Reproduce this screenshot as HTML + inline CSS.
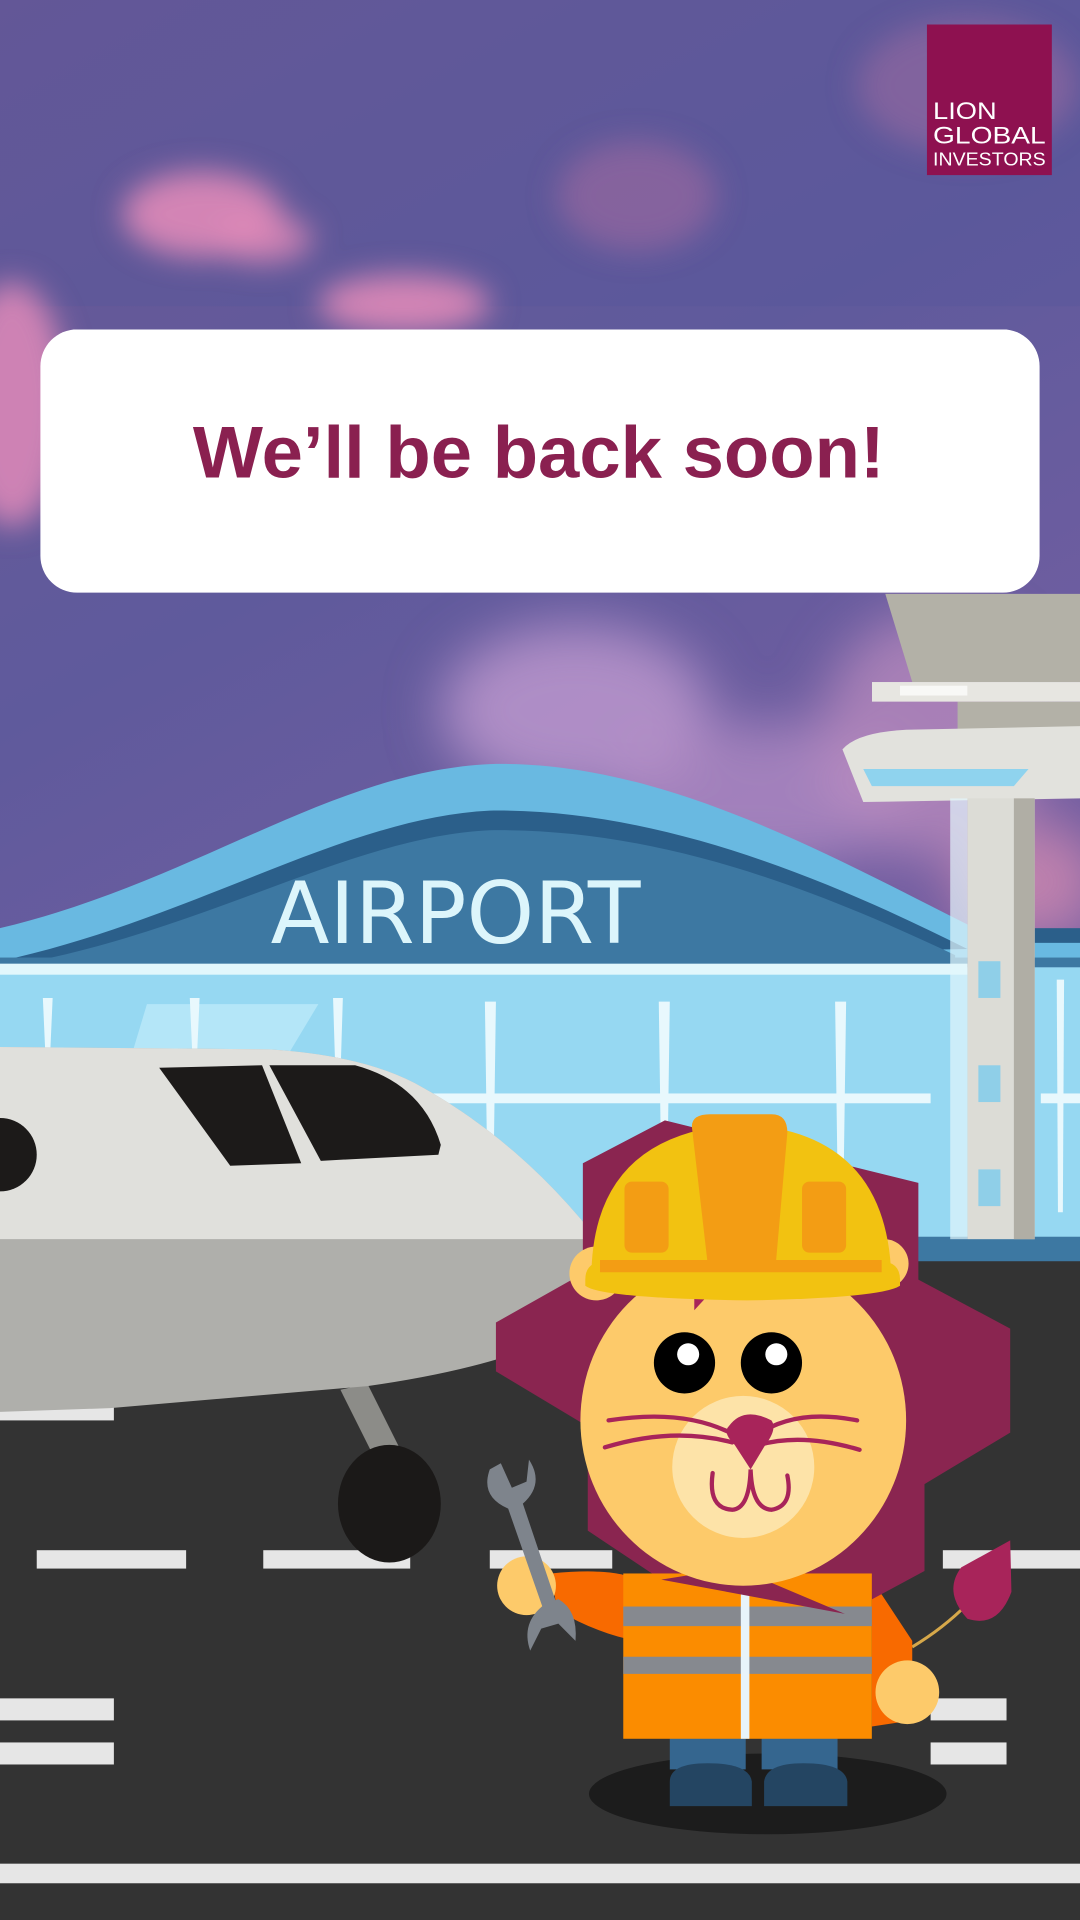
<!DOCTYPE html>
<html><head><meta charset="utf-8"><style>
html,body{margin:0;padding:0;width:1080px;height:1920px;overflow:hidden;background:#333}
svg{display:block}
</style></head><body>
<svg width="1080" height="1920" viewBox="0 0 882 1568" xmlns="http://www.w3.org/2000/svg">
<defs>
<linearGradient id="sky" x1="0" y1="0" x2="0.3" y2="1">
<stop offset="0" stop-color="#6a5896"/><stop offset="0.35" stop-color="#5f5a9c"/><stop offset="0.7" stop-color="#765fa2"/><stop offset="1" stop-color="#9170aa"/></linearGradient>
<filter id="b" x="-50%" y="-50%" width="200%" height="200%"><feGaussianBlur stdDeviation="12"/></filter>
<filter id="b2" x="-50%" y="-50%" width="200%" height="200%"><feGaussianBlur stdDeviation="22"/></filter>
</defs>
<rect width="882" height="1568" fill="url(#sky)"/>
<rect x="0" y="0" width="882" height="250" fill="#55569a" opacity="0.35"/>
<g filter="url(#b)">
<ellipse cx="165" cy="175" rx="65" ry="35" fill="#e08ab8" opacity="0.9"/>
<ellipse cx="215" cy="195" rx="40" ry="20" fill="#e08ab8" opacity="0.8"/>
<ellipse cx="330" cy="248" rx="70" ry="24" fill="#e08ab8" opacity="0.9"/>
<ellipse cx="10" cy="330" rx="45" ry="100" fill="#e08ab8" opacity="0.85"/>
<ellipse cx="520" cy="160" rx="65" ry="45" fill="#a06aa0" opacity="0.6"/>
<ellipse cx="790" cy="70" rx="90" ry="55" fill="#9a6aa0" opacity="0.6"/>
</g>
<g filter="url(#b2)">
<ellipse cx="470" cy="580" rx="110" ry="70" fill="#c09ad0" opacity="0.8"/>
<ellipse cx="620" cy="650" rx="120" ry="60" fill="#b890c8" opacity="0.7"/>
<ellipse cx="760" cy="600" rx="90" ry="100" fill="#c08ec0" opacity="0.7"/>
<ellipse cx="840" cy="720" rx="60" ry="50" fill="#d08ab0" opacity="0.8"/>
</g>
<rect x="757" y="20" width="102" height="123" fill="#8e1150"/>
<g font-family="Liberation Sans, sans-serif" fill="#fff">
<text x="762" y="97" font-size="20" textLength="52" lengthAdjust="spacingAndGlyphs">LION</text>
<text x="762" y="117" font-size="20" textLength="92" lengthAdjust="spacingAndGlyphs">GLOBAL</text>
<text x="762" y="135" font-size="15" textLength="92" lengthAdjust="spacingAndGlyphs">INVESTORS</text>
</g>
<polygon points="723,485 882,485 882,557 745,557" fill="#b3b1a7"/>
<rect x="712" y="557" width="170" height="16" fill="#e7e6e1"/>
<rect x="735" y="560" width="55" height="8" fill="#fff" opacity="0.7"/>
<rect x="782" y="573" width="100" height="28" fill="#b3b1a7"/>
<path d="M688,612 Q700,598 740,596 L882,593 L882,652 L705,655 Z" fill="#e2e2dd"/>
<polygon points="705,628 840,628 828,642 712,642" fill="#8fd3ee"/>
<path d="M0,758 C160,720 270,630 400,624 C540,620 680,700 800,760 L882,760 L882,790 L0,790 Z" fill="#69b9e1"/>
<path d="M0,785 C160,750 280,668 400,662 C540,660 680,720 790,775 L0,790 Z" fill="#2b5f8a"/>
<path d="M0,790 C160,765 285,683 400,678 C540,676 670,728 780,780 L780,790 Z" fill="#3d78a2"/>
<rect x="0" y="782" width="882" height="8" fill="#3d78a2"/>
<text x="372" y="770" text-anchor="middle" font-family="DejaVu Sans, sans-serif" font-weight="normal" font-size="70" fill="#dcf5fb" textLength="302" lengthAdjust="spacingAndGlyphs">AIRPORT</text>
<rect x="0" y="790" width="882" height="240" fill="#96d8f2"/>
<rect x="0" y="787" width="790" height="9" fill="#e2f7fc"/>
<rect x="845" y="758" width="37" height="12" fill="#2b5f8a"/>
<polygon points="120,820 260,820 230,870 105,870" fill="#b4e6f8"/>
<g fill="#e8f8fd">
<polygon points="35,815 43,815 41,860 37,860"/>
<polygon points="155,815 163,815 161,860 157,860"/>
<polygon points="272,815 280,815 278,880 274,880"/>
<polygon points="396,818 405,818 403,960 398,960"/>
<polygon points="538,818 547,818 545,960 540,960"/>
<polygon points="682,818 691,818 689,960 684,960"/>
<rect x="340" y="893" width="420" height="8"/>
<polygon points="863,800 869,800 868,990 864,990"/>
<rect x="850" y="893" width="32" height="8"/>
</g>
<rect x="740" y="1010" width="142" height="22" fill="#3d78a2"/>
<rect x="790" y="652" width="55" height="360" fill="#dcdcd6"/>
<rect x="828" y="652" width="17" height="360" fill="#b0aea5"/>
<rect x="776" y="652" width="14" height="360" fill="#e2f7fc" opacity="0.7"/>
<g fill="#8fcfe8"><rect x="799" y="785" width="18" height="30"/><rect x="799" y="870" width="18" height="30"/><rect x="799" y="955" width="18" height="30"/></g>
<rect x="0" y="1030" width="882" height="538" fill="#333"/>
<g fill="#e6e6e6">
<rect x="30" y="1266" width="122" height="15"/><rect x="215" y="1266" width="120" height="15"/><rect x="400" y="1266" width="100" height="15"/><rect x="770" y="1266" width="112" height="15"/>
<rect x="0" y="1387" width="93" height="18"/><rect x="0" y="1423" width="93" height="18"/>
<rect x="760" y="1387" width="62" height="18"/><rect x="760" y="1423" width="62" height="18"/>
<rect x="0" y="1522" width="882" height="16"/>
<rect x="0" y="1148" width="93" height="12"/>
</g>
<path d="M300,1130 L340,1210 L318,1215 L278,1135 Z" fill="#8c8c88"/>
<ellipse cx="318" cy="1228" rx="42" ry="48" fill="#1b1918"/>
<path d="M0,855 L220,857 Q300,862 345,888 Q420,930 478,1000 L478,1080 Q420,1115 300,1132 L90,1150 L0,1153 Z" fill="#afafab"/>
<path d="M0,855 L220,857 Q300,862 345,888 Q420,930 478,1000 L478,1012 L0,1012 Z" fill="#e0e0dc"/>
<polygon points="130,872 214,870 246,950 188,952" fill="#1c1a19"/>
<path d="M220,870 L290,870 Q345,885 360,935 L358,943 L262,948 Z" fill="#1c1a19"/>
<circle cx="0" cy="943" r="30" fill="#1c1a19"/>
<ellipse cx="627" cy="1465" rx="146" ry="33" fill="#1c1c1c"/>
<rect x="547" y="1405" width="62" height="40" fill="#35668f"/>
<rect x="622" y="1405" width="62" height="40" fill="#35668f"/>
<path d="M547,1475 L547,1455 Q547,1440 578,1440 Q612,1440 614,1455 L614,1475 Z" fill="#244562"/>
<path d="M624,1475 L624,1455 Q626,1440 656,1440 Q690,1440 692,1455 L692,1475 Z" fill="#244562"/>
<path d="M745,1345 Q770,1330 790,1310" stroke="#d6a84a" stroke-width="2.5" fill="none"/>
<path d="M790,1322 Q770,1300 785,1280 L825,1258 L826,1300 Q815,1330 790,1322 Z" fill="#a8245a"/>
<path d="M712,1290 L745,1340 L745,1405 L712,1410 Z" fill="#f86a00"/>
<circle cx="741" cy="1382" r="26" fill="#fdca6a"/>
<path d="M450,1285 Q500,1280 520,1290 L520,1340 Q490,1335 455,1315 Z" fill="#f86a00"/>
<circle cx="430" cy="1295" r="24" fill="#fdca6a"/>
<polygon points="476,950 543,915 750,966 750,1045 825,1085 825,1170 755,1212 755,1283 690,1318 540,1290 480,1250 480,1165 405,1120 405,1080 476,1040" fill="#8a2550"/>
<rect x="509" y="1285" width="203" height="135" fill="#fb8c00"/>
<rect x="509" y="1312" width="203" height="16" fill="#86898f"/>
<rect x="509" y="1353" width="203" height="14" fill="#86898f"/>
<rect x="605" y="1282" width="7" height="138" fill="#e8f4fa"/>
<path d="M540,1290 L603,1280 L612,1285 L690,1318 Z" fill="#8a2550"/>
<circle cx="487" cy="1040" r="22" fill="#fdca6a"/>
<circle cx="722" cy="1032" r="20" fill="#fdca6a"/>
<ellipse cx="607" cy="1160" rx="133" ry="135" fill="#fdca6a"/>
<circle cx="607" cy="1198" r="58" fill="#fde3a8"/>
<polygon points="567,1045 590,1045 567,1070" fill="#a8245a"/>
<circle cx="559" cy="1113" r="25" fill="#000"/><circle cx="630" cy="1113" r="25" fill="#000"/>
<circle cx="562" cy="1106" r="9" fill="#fff"/><circle cx="634" cy="1106" r="9" fill="#fff"/>
<path d="M595,1165 Q607,1148 630,1160 Q635,1167 625,1180 L613,1200 L600,1180 Q590,1170 595,1165 Z" fill="#a8245a"/>
<g stroke="#a8245a" stroke-width="3.5" fill="none" stroke-linecap="round">
<path d="M582,1203 Q578,1232 598,1233 Q612,1232 613,1200 Q614,1232 630,1233 Q648,1230 643,1205"/>
<path d="M497,1160 Q560,1150 600,1172"/><path d="M494,1182 Q550,1165 598,1178"/>
<path d="M700,1160 Q650,1150 618,1172"/><path d="M702,1184 Q655,1170 620,1180"/>
</g>
<path d="M483,1050 Q480,925 607,918 Q728,925 728,1050 Z" fill="#f2c211"/>
<path d="M565,920 Q565,910 580,910 L630,910 Q643,910 643,925 L632,1050 L580,1050 Z" fill="#f39d14"/>
<rect x="510" y="965" width="36" height="58" rx="6" fill="#f39d14"/>
<rect x="655" y="965" width="36" height="58" rx="6" fill="#f39d14"/>
<path d="M478,1045 Q478,1030 495,1030 L718,1030 Q735,1030 735,1045 L735,1050 Q720,1060 610,1062 Q490,1060 478,1050 Z" fill="#f2c211"/>
<rect x="490" y="1029" width="230" height="10" fill="#f39d14"/>
<g fill="#7e848c">
<path d="M400,1200 Q392,1222 415,1232 L445,1318 L456,1314 L427,1228 Q445,1212 432,1192 L430,1210 L418,1215 L409,1195 Z"/>
<path d="M445,1310 Q425,1325 433,1348 L442,1330 L456,1326 L470,1340 Q472,1315 456,1306 Z"/>
</g>
<rect x="33" y="269" width="816" height="215" rx="30" fill="#fff"/>
<text x="440" y="390" text-anchor="middle" font-family="Liberation Sans, sans-serif" font-weight="bold" font-size="60" fill="#8a2050" textLength="565" lengthAdjust="spacingAndGlyphs">We’ll be back soon!</text>
</svg>
</body></html>
